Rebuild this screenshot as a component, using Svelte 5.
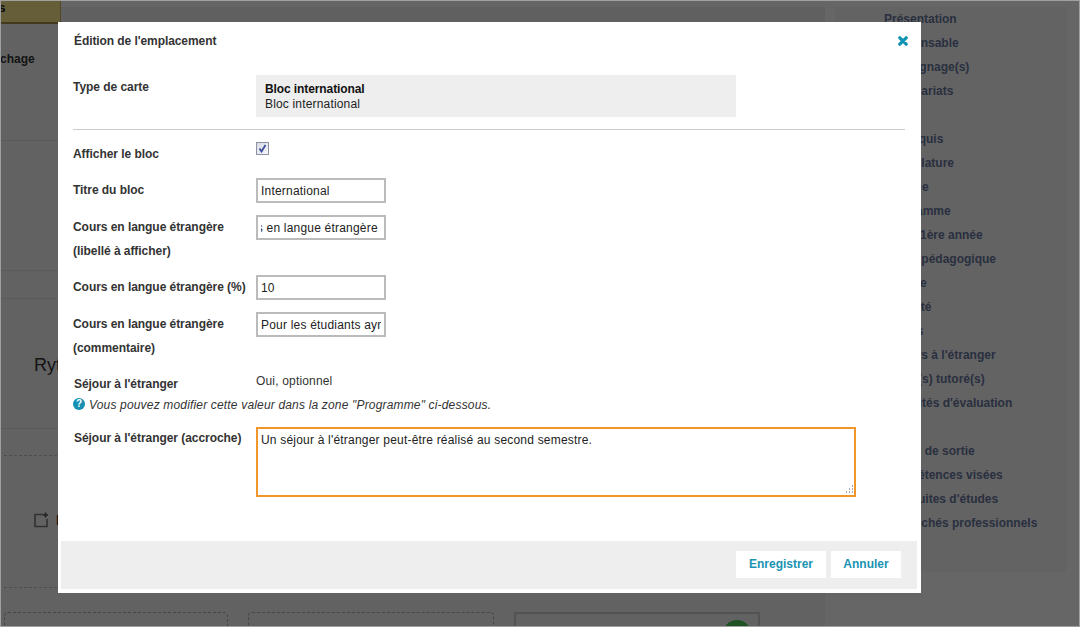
<script>
  import { onMount } from 'svelte';

  const navGroups = [
    ['Présentation', 'Responsable', 'Témoignage(s)', 'Partenariats'],
    ['Pré-requis', 'Capitulature', 'Licence', 'Programme', 'Stage 1ère année', 'Projet pédagogique', 'Langue', 'Sécurité', 'Stages', "Séjours à l'étranger", 'Projet(s) tutoré(s)', "Modalités d'évaluation"],
    ['Profils de sortie', 'Compétences visées', "Poursuites d'études", 'Débouchés professionnels']
  ];

  // resize grip of the textarea, a small triangle of dots
  const grip = [[8, 0], [8, 3], [5, 3], [8, 6], [5, 6], [2, 6]];

  let labelInput;

  onMount(() => {
    // the long value shows its end, as after typing
    labelInput.scrollLeft = 9999;
  });
</script>

<div class="frame">
  <div class="page">
    <main class="main">
      <div class="tabs">
        <span class="tab">Options</span>
        <span class="tabs-rest"></span>
      </div>
      <section class="band b1"><p class="cut">Affichage</p></section>
      <section class="band b2"></section>
      <section class="band b3"></section>
      <section class="band b4"><h2>Rythme</h2></section>
      <section class="add">
        <div class="add-line">
          <svg width="16" height="16" viewBox="0 0 16 16" fill="none" stroke="#7a7a7a" stroke-width="1.6">
            <path d="M10 2.5H2v12h12V7" />
            <path d="M12.5 0.5v5M10 3h5" stroke="#555" />
          </svg>
          <span>Bloc</span>
        </div>
      </section>
      <div class="dash-row"></div>
      <div class="slots">
        <div class="slot s1"></div>
        <div class="slot s2"></div>
        <div class="slot s3"><i class="dot"></i></div>
      </div>
    </main>
    <aside class="side">
      <nav class="panel">
        {#each navGroups as group}
          <ul>
            {#each group as item}
              <li>{item}</li>
            {/each}
          </ul>
        {/each}
      </nav>
    </aside>
  </div>

  <div class="overlay"></div>

  <div class="modal">
    <header class="head">
      <h1>Édition de l'emplacement</h1>
      <button class="close" type="button" aria-label="Fermer">
        <svg width="10" height="10" viewBox="0 0 10 10" fill="none" stroke="#0f93b3" stroke-width="3.2" stroke-linecap="round">
          <path d="M1.8 1.8l6.4 6.4M8.2 1.8l-6.4 6.4" />
        </svg>
      </button>
    </header>

    <form class="form">
      <div class="row">
        <span class="lab">Type de carte</span>
        <div class="card-type">
          <strong>Bloc international</strong>
          <span>Bloc international</span>
        </div>
      </div>
      <hr />
      <div class="row">
        <span class="lab">Afficher le bloc</span>
        <span class="check">
          <input type="checkbox" checked />
          <svg width="9" height="9" viewBox="0 0 9 9" fill="none" stroke="#3d4f9c" stroke-width="1.8">
            <path d="M1.5 4.5l2 3 4-6.5" />
          </svg>
        </span>
      </div>
      <div class="row">
        <span class="lab">Titre du bloc</span>
        <input class="text" type="text" value="International" />
      </div>
      <div class="row">
        <span class="lab">Cours en langue étrangère<br />(libellé à afficher)</span>
        <input class="text scrolled" type="text" value="Cours en langue étrangère" bind:this={labelInput} />
      </div>
      <div class="row">
        <span class="lab">Cours en langue étrangère (%)</span>
        <input class="text" type="text" value="10" />
      </div>
      <div class="row">
        <span class="lab">Cours en langue étrangère<br />(commentaire)</span>
        <input class="text" type="text" value="Pour les étudiants ayn" />
      </div>
      <div class="row stay">
        <span class="lab shift">Séjour à l'étranger</span>
        <span class="value">Oui, optionnel</span>
      </div>
      <p class="help">
        <span class="q">?</span>
        <em>Vous pouvez modifier cette valeur dans la zone "Programme" ci-dessous.</em>
      </p>
      <div class="row pitch">
        <span class="lab shift">Séjour à l'étranger (accroche)</span>
        <div class="area">
          <textarea>Un séjour à l'étranger peut-être réalisé au second semestre.</textarea>
          <svg class="grip" width="9" height="9" viewBox="0 0 9 9" fill="#a8a8a8">
            {#each grip as [x, y]}
              <rect {x} {y} width="1" height="2" />
            {/each}
          </svg>
        </div>
      </div>
    </form>

    <footer class="foot">
      <button class="save" type="button">Enregistrer</button>
      <button class="cancel" type="button">Annuler</button>
    </footer>
  </div>
</div>

<style>
  :global(body) {
    margin: 0;
    background: #fff;
  }

  .frame {
    position: relative;
    box-sizing: border-box;
    width: 1080px;
    height: 627px;
    border: 1px solid #a0a0a0;
    overflow: hidden;
    font-family: "Liberation Sans", Arial, sans-serif;
    font-size: 12px;
    color: #333;
  }

  .page {
    display: flex;
    height: 100%;
    background: #fff;
  }

  .main {
    width: 824px;
    flex: none;
    background: #f6f6f6;
    overflow: hidden;
  }

  .tabs {
    display: flex;
    height: 23px;
    background: #fff;
  }

  .tab {
    display: block;
    flex: none;
    box-sizing: border-box;
    width: 60px;
    height: 23px;
    background: #ffe88f;
    border-right: 1px solid #c9b45f;
    border-bottom: 2px solid #a3914a;
    font-weight: bold;
    line-height: 14px;
    overflow: hidden;
    white-space: nowrap;
    color: #222;
    text-indent: -41px;
  }

  .tabs-rest {
    flex: 1;
    margin-top: 6px;
    background: #f0f0f0;
  }

  .band {
    box-sizing: border-box;
    border-bottom: 1px solid #e0e0e0;
  }

  .b1 {
    height: 117px;
    padding-top: 27px;
  }

  .b2 {
    height: 130px;
  }

  .b3 {
    height: 28px;
  }

  .b4 {
    height: 130px;
    padding: 55px 0 0 33px;
  }

  .cut {
    margin: 0 0 0 -21px;
    font-weight: bold;
    line-height: 16px;
    color: #333;
  }

  h2 {
    margin: 0;
    font-size: 18px;
    font-weight: normal;
    line-height: 22px;
    color: #333;
  }

  .add {
    box-sizing: border-box;
    height: 132px;
    margin: 26px 0 0 3px;
    padding-top: 56px;
    border-top: 1px dashed #c0c0c0;
  }

  .add-line {
    display: flex;
    align-items: center;
    gap: 7px;
    margin-left: 29px;
    font-size: 14px;
    font-weight: bold;
    color: #222;
  }

  .dash-row {
    box-sizing: border-box;
    height: 25px;
    margin-left: 3px;
    border-top: 1px dashed #c0c0c0;
  }

  .slots {
    display: flex;
    gap: 20px;
    padding-left: 3px;
  }

  .slot {
    height: 40px;
    box-sizing: border-box;
    border: 1px dashed #b0b0b0;
    border-radius: 4px;
  }

  .s1 {
    width: 224px;
  }

  .s2 {
    width: 246px;
  }

  .s3 {
    position: relative;
    width: 246px;
    border: 2px solid #d0d0d0;
    border-radius: 0;
  }

  .dot {
    position: absolute;
    top: 6px;
    right: 7px;
    width: 28px;
    height: 28px;
    border-radius: 50%;
    background: #4ccc55;
  }

  .side {
    flex: 1;
    padding: 6px 13px 0 10px;
    background: #fff;
  }

  .panel {
    box-sizing: border-box;
    height: 565px;
    padding-left: 49px;
    background: #f7f7f7;
  }

  .panel ul {
    margin: 0 0 24px;
    padding: 0;
    list-style: none;
  }

  .panel li {
    line-height: 24px;
    font-weight: bold;
    color: #69789f;
    white-space: nowrap;
  }

  .overlay {
    position: absolute;
    inset: 0;
    background: rgba(0, 0, 0, 0.6);
  }

  .modal {
    position: absolute;
    left: 57px;
    top: 21px;
    display: flex;
    flex-direction: column;
    box-sizing: border-box;
    width: 863px;
    height: 571px;
    background: #fff;
  }

  .head {
    display: flex;
    justify-content: space-between;
    align-items: center;
    height: 38px;
    padding: 0 13px 0 16px;
  }

  h1 {
    margin: 0;
    font-size: 12px;
    font-weight: bold;
    line-height: 38px;
    letter-spacing: -0.08px;
    color: #333;
  }

  .close {
    display: flex;
    padding: 0;
    border: 0;
    background: none;
  }

  .form {
    padding: 15px 16px 0 15px;
  }

  .row {
    display: flex;
    align-items: flex-start;
    margin-bottom: 12px;
  }

  .lab {
    flex: none;
    width: 183px;
    font-weight: bold;
    line-height: 24px;
    letter-spacing: -0.05px;
    color: #333;
  }

  .shift {
    width: 182px;
    margin-left: 1px;
  }

  .card-type {
    display: flex;
    flex-direction: column;
    box-sizing: border-box;
    width: 480px;
    height: 42px;
    padding: 7px 9px 0;
    background: #eee;
    line-height: 15px;
    letter-spacing: 0.17px;
    color: #222;
  }

  .card-type strong {
    letter-spacing: -0.1px;
    color: #111;
  }

  hr {
    height: 1px;
    margin: 12px 0;
    border: 0;
    background: #ccc;
  }

  .check {
    position: relative;
    display: flex;
    width: 13px;
    height: 13px;
  }

  .check input {
    appearance: none;
    box-sizing: border-box;
    width: 13px;
    height: 13px;
    margin: 0;
    border: 1px solid #8e93a3;
    background: linear-gradient(135deg, #d8dbe6, #f6f6fa);
  }

  .check svg {
    position: absolute;
    left: 2px;
    top: 2px;
  }

  .text {
    box-sizing: border-box;
    width: 130px;
    height: 25px;
    padding: 0 3px;
    border: 2px solid #bbb;
    border-radius: 0;
    outline: 0;
    font: 12px "Liberation Sans", Arial, sans-serif;
    letter-spacing: 0.2px;
    color: #222;
  }

  .scrolled {
    padding-right: 6px;
  }

  .stay {
    margin-bottom: 0;
  }

  .value {
    margin-top: -2px;
    line-height: 22px;
    letter-spacing: 0.17px;
    color: #333;
  }

  .help {
    display: flex;
    align-items: center;
    gap: 4px;
    height: 18px;
    margin: 0 0 12px;
    color: #333;
  }

  .help em {
    letter-spacing: 0.17px;
  }

  .q {
    display: block;
    flex: none;
    width: 12px;
    height: 12px;
    margin-top: -2px;
    border-radius: 50%;
    background: #1590b3;
    color: #fff;
    font-size: 10px;
    font-weight: bold;
    line-height: 12px;
    text-align: center;
  }

  .pitch {
    margin-bottom: 0;
  }

  .area {
    position: relative;
    display: flex;
    margin-top: 1px;
  }

  textarea {
    box-sizing: border-box;
    width: 600px;
    height: 70px;
    margin: 0;
    padding: 4px 3px;
    border: 2px solid #f0962a;
    border-radius: 0;
    outline: 0;
    resize: none;
    font: 12px "Liberation Sans", Arial, sans-serif;
    line-height: 15px;
    letter-spacing: 0.2px;
    color: #222;
  }

  .grip {
    position: absolute;
    right: 3px;
    bottom: 3px;
  }

  .foot {
    display: flex;
    justify-content: flex-end;
    gap: 5px;
    box-sizing: border-box;
    height: 48px;
    margin: auto 4px 4px 3px;
    padding: 10px 16px 11px;
    background: #eee;
  }

  .foot button {
    padding: 0 0 2px;
    border: 0;
    background: #fff;
    font: bold 12px "Liberation Sans", Arial, sans-serif;
    color: #1a93b3;
  }

  .save {
    width: 90px;
  }

  .cancel {
    width: 70px;
  }
</style>
